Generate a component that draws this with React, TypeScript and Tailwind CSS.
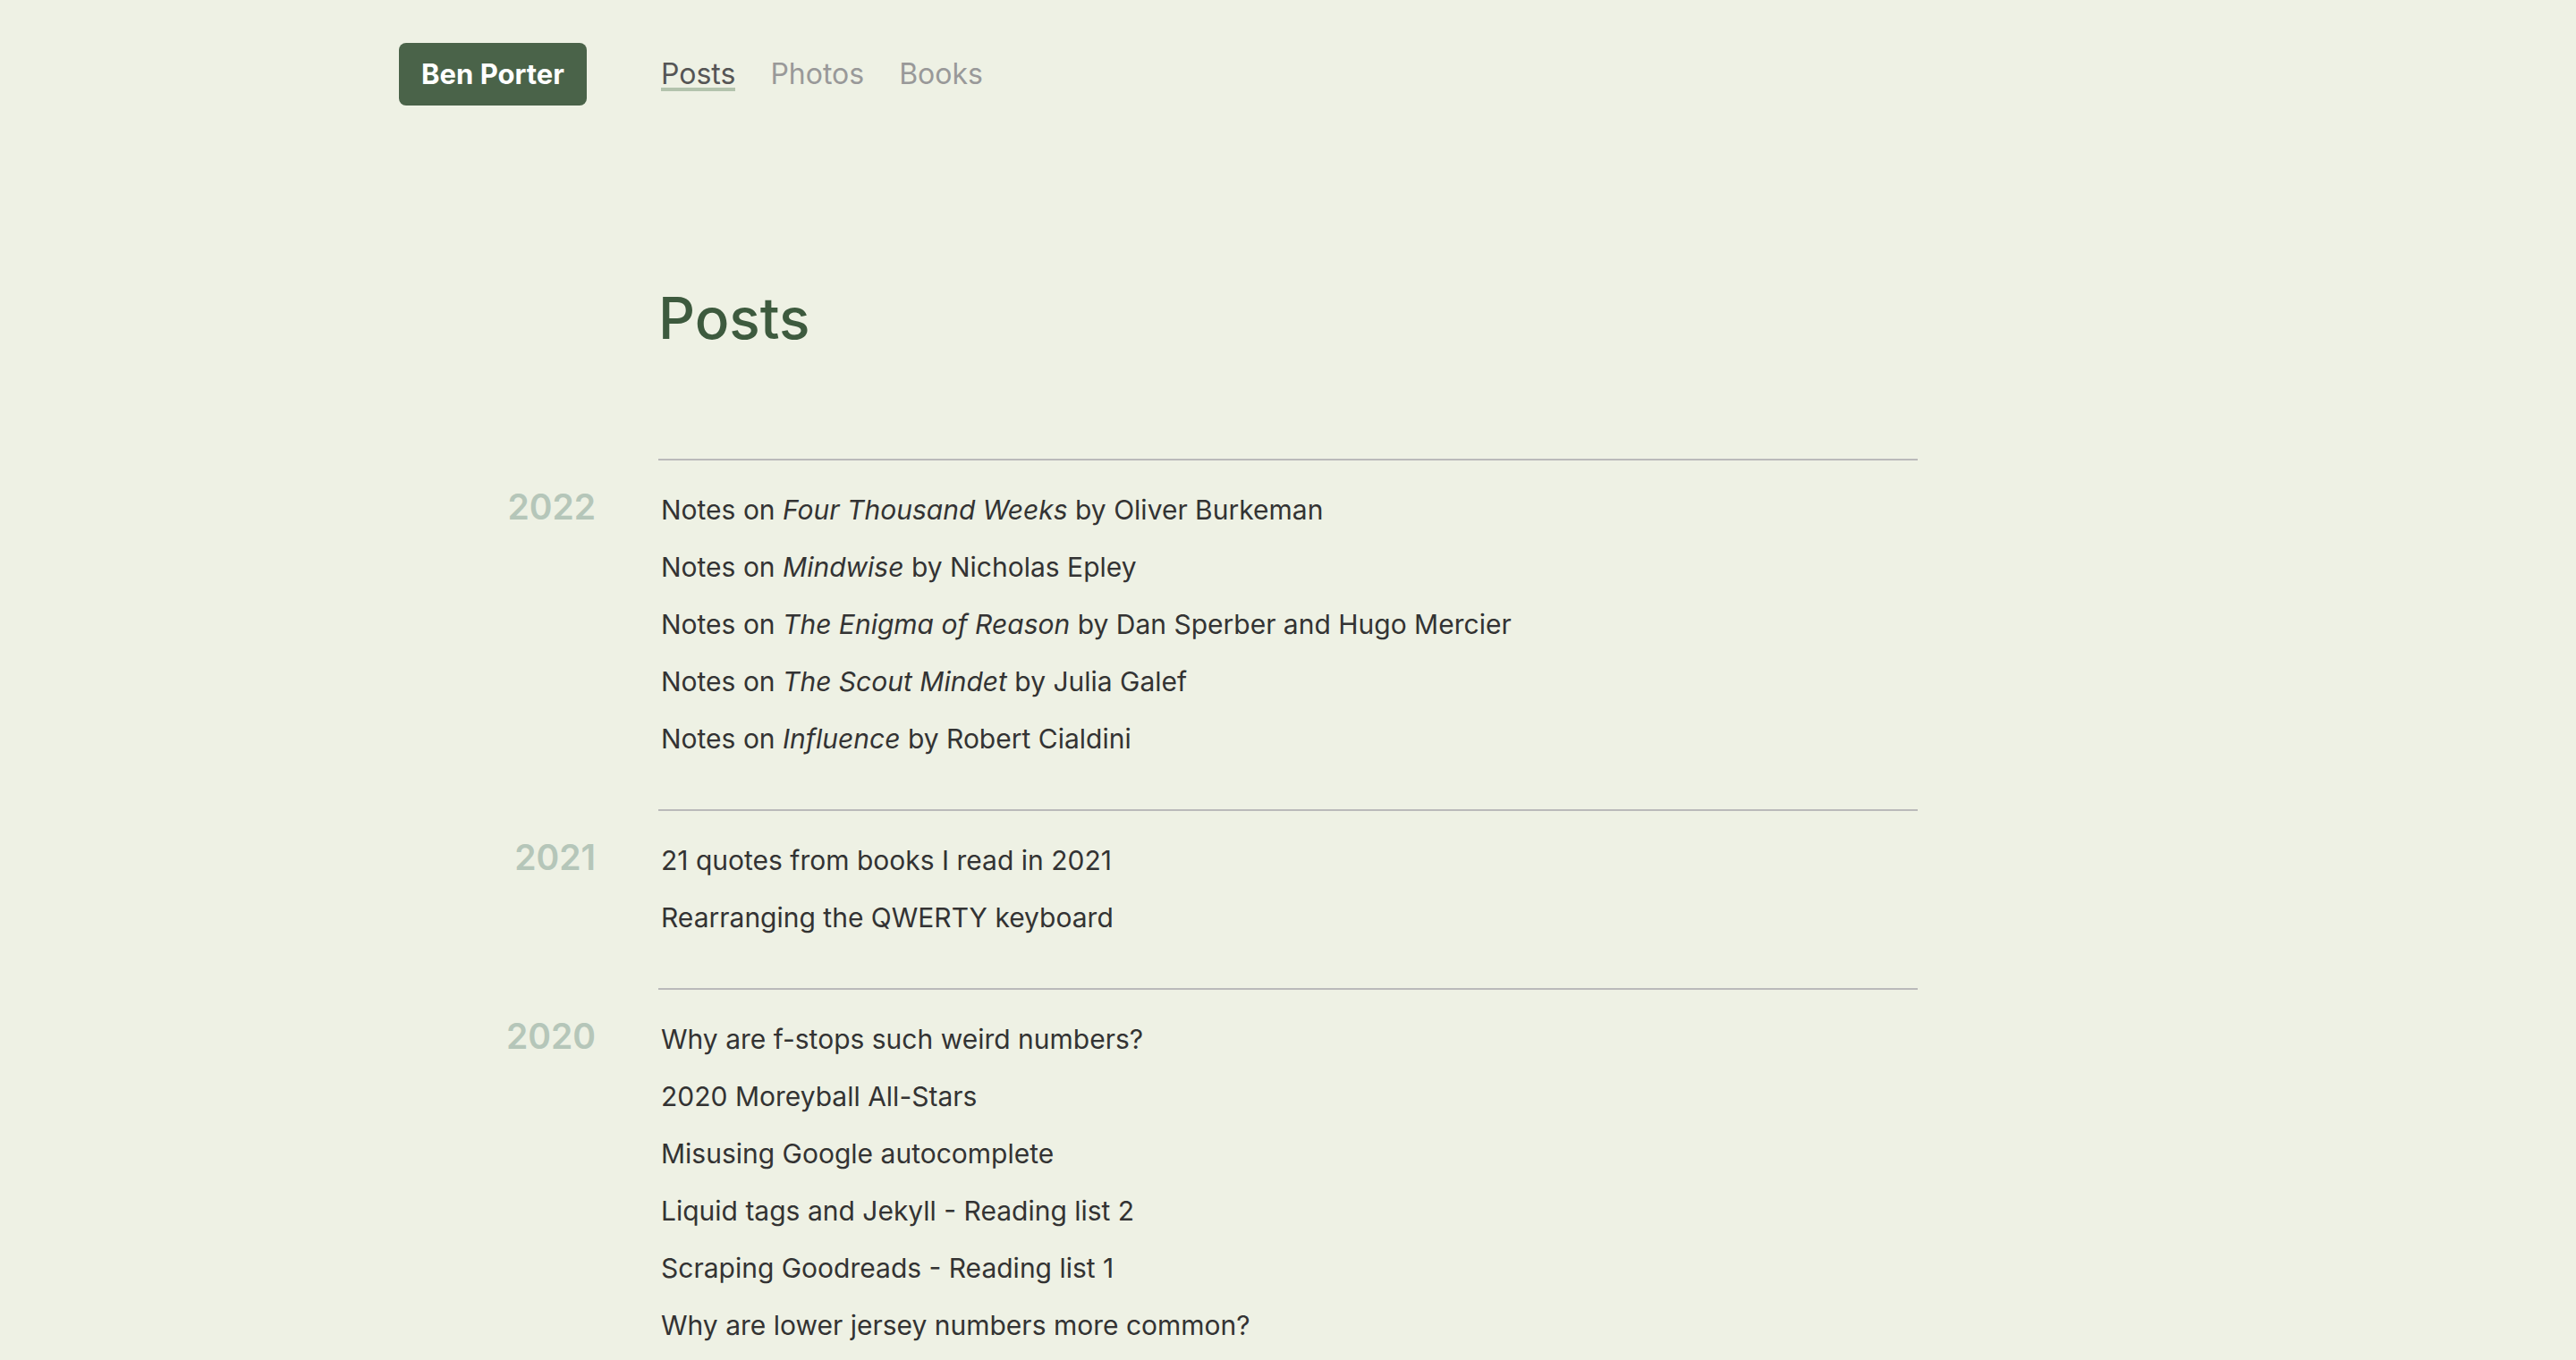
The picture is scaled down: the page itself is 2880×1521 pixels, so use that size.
import type { ReactNode } from "react";

type Post = { title: ReactNode };
type Year = { year: string; posts: Post[] };

function book(name: string, author: string) {
    return (
        <>
            Notes on <em>{name}</em> by {author}
        </>
    );
}

const years: Year[] = [
    {
        year: "2022",
        posts: [
            { title: book("Four Thousand Weeks", "Oliver Burkeman") },
            { title: book("Mindwise", "Nicholas Epley") },
            { title: book("The Enigma of Reason", "Dan Sperber and Hugo Mercier") },
            { title: book("The Scout Mindet", "Julia Galef") },
            { title: book("Influence", "Robert Cialdini") },
        ],
    },
    {
        year: "2021",
        posts: [
            { title: "21 quotes from books I read in 2021" },
            { title: "Rearranging the QWERTY keyboard" },
        ],
    },
    {
        year: "2020",
        posts: [
            { title: "Why are f-stops such weird numbers?" },
            { title: "2020 Moreyball All-Stars" },
            { title: "Misusing Google autocomplete" },
            { title: "Liquid tags and Jekyll - Reading list 2" },
            { title: "Scraping Goodreads - Reading list 1" },
            { title: "Why are lower jersey numbers more common?" },
        ],
    },
];

function Header() {
    return (
        <header className="flex items-center pt-[48px]">
            <div className="w-[290px] shrink-0">
                <a className="flex h-[70px] w-[210px] items-center justify-center rounded-[8px] bg-[#4a6349] text-[31px] font-bold text-white">
                    Ben Porter
                </a>
            </div>
            <nav className="flex gap-[39px] pl-[3px] text-[32px] leading-none">
                <a className="relative text-[#555555]">
                    Posts
                    <span className="absolute left-0 right-0 top-[31px] h-[4px] bg-[#b3c3ad]" />
                </a>
                <a className="text-[#999999]">Photos</a>
                <a className="text-[#999999]">Books</a>
            </nav>
        </header>
    );
}

function YearGroup({ year, posts }: Year) {
    return (
        <section className="flex items-baseline">
            <div className="w-[290px] shrink-0 pr-[70px] text-right text-[39px] font-semibold text-[#b5c6b9]">
                {year}
            </div>
            <ul className="flex w-[1408px] flex-col border-t-2 border-[#bababa] pb-[47px] pt-[23px]">
                {posts.map((post, i) => (
                    <li key={i} className="pl-[3px] text-[30px] leading-[64px] text-[#333333]">
                        {post.title}
                    </li>
                ))}
            </ul>
        </section>
    );
}

export default function App() {
    return (
        <div className="min-h-screen bg-[#eef1e4] font-['Inter',sans-serif]">
            <div className="mx-auto w-[1988px]">
                <Header />
                <main className="pl-[290px]">
                    <h1 className="mt-[199px] text-[64px] font-medium leading-[77px] text-[#3d5a3e]">Posts</h1>
                </main>
                <div className="mt-[119px]">
                    {years.map((y) => (
                        <YearGroup key={y.year} {...y} />
                    ))}
                </div>
            </div>
        </div>
    );
}
